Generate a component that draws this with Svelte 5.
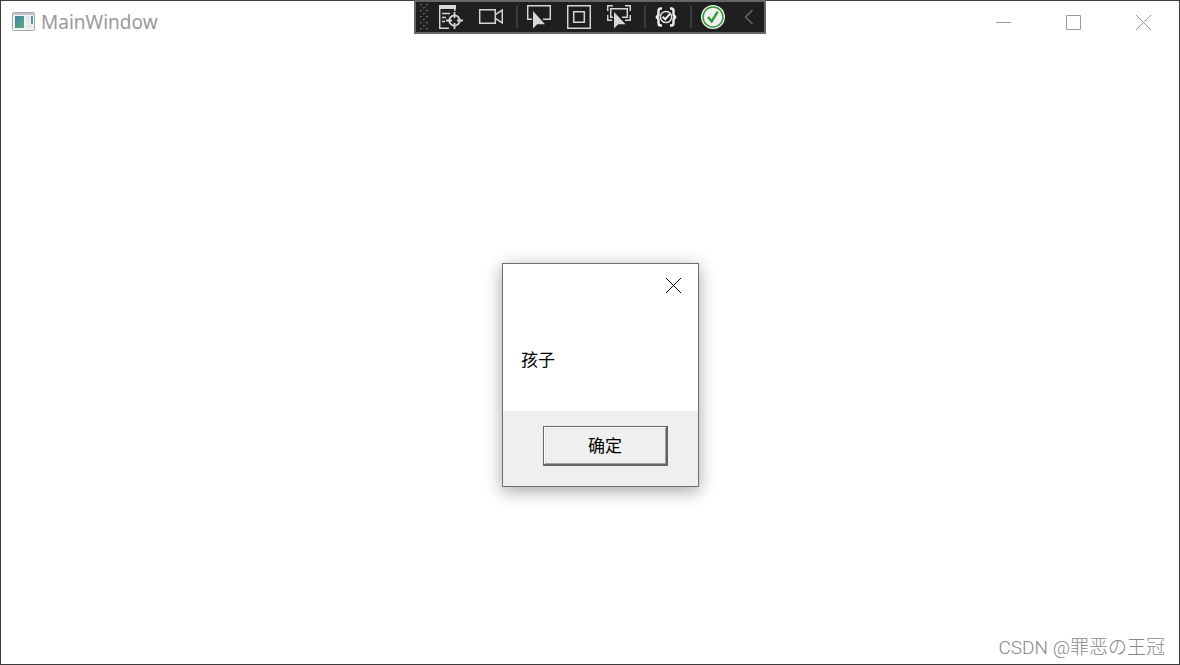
<script>
  let open = $state(true);
</script>

<main class="window">
  <header class="titlebar">
    <svg class="app-icon" viewBox="0 0 24 20" aria-hidden="true">
      <defs>
        <linearGradient id="pane" x1="0" y1="0" x2="1" y2="1">
          <stop offset="0" stop-color="#4580a8" />
          <stop offset="1" stop-color="#5cb377" />
        </linearGradient>
      </defs>
      <rect x="0.5" y="0.5" width="22" height="18" rx="1" fill="#f3f3f4" stroke="#a4a7ac" />
      <path d="M1 2H22" stroke="#c3c8ce" stroke-width="2" />
      <rect x="3" y="4" width="9" height="12" fill="url(#pane)" />
      <path d="M14 4h4v7h-4zM14 13h7v3h-7z" fill="#e6e6e8" />
      <rect x="19" y="4" width="2" height="8" fill="url(#pane)" />
    </svg>
    <h1>MainWindow</h1>
    <div class="controls">
      <button aria-label="Minimize">
        <svg viewBox="0 0 16 16"><path d="M0 7.5H15" /></svg>
      </button>
      <button aria-label="Maximize">
        <svg viewBox="0 0 16 16"><path d="M.5.5h14v14H.5z" /></svg>
      </button>
      <button aria-label="Close">
        <svg viewBox="0 0 16 16"><path d="M0 0L15 15M15 0L0 15" /></svg>
      </button>
    </div>
  </header>

  <nav class="toolbar" aria-label="Debug tools">
    <svg class="grip" viewBox="0 0 9 28" aria-hidden="true">
      <defs>
        <pattern id="dots" width="6" height="6" patternUnits="userSpaceOnUse">
          <path d="M0 1h2v1H0zM3 4h2v1H3z" fill="#666" />
          <path d="M0 2h1v1H0zM3 5h1v1H3z" fill="#444" />
        </pattern>
      </defs>
      <rect width="9" height="28" fill="url(#dots)" />
    </svg>
    <div class="group">
      <button aria-label="Live visual tree">
        <svg viewBox="0 0 24 24">
          <path d="M0 0H17V4H0z" fill="#d6d6d6" stroke="none" />
          <path d="M.7 3V23.3H10M15.8 3V6M3 8.5H11M3 12.5H7M3 16.5H6" />
          <circle cx="15.5" cy="15.5" r="5.2" stroke-width="1.8" />
          <path d="M15.5 7V13M15.5 18V24M7 15.5H13M18 15.5H24" stroke-width="1.8" />
        </svg>
      </button>
      <button aria-label="Record">
        <svg viewBox="0 0 24 24">
          <path d="M.7 4.7H16.3V18.3H.7zM16.3 9.7L23.3 5.2V17.8L16.3 13.3" />
        </svg>
      </button>
    </div>
    <span class="sep"></span>
    <div class="group">
      <button aria-label="Select element">
        <svg viewBox="0 0 24 24">
          <path d="M5 14.3H.7V.7H23.3V14.3H16" />
          <path d="M6 6V23.5L10.3 19.3H18z" fill="#d6d6d6" stroke="none" />
        </svg>
      </button>
      <button aria-label="Display layout adorners">
        <svg viewBox="0 0 24 24">
          <path d="M.7.7H23.3V23.3H.7zM6.7 6.7H17.3V17.3H6.7z" />
        </svg>
      </button>
      <button aria-label="Track focused element">
        <svg viewBox="0 0 24 24">
          <path d="M.7 6V.7H6M18 .7H23.3V6M.7 10V15.3H5M23.3 10V15.3H18M6 12.3H3.7V3.7H20.3V12.3H15" />
          <path d="M7 7V23.5L11.3 19.3H18.5z" fill="#d6d6d6" stroke="#1f1f1f" stroke-width="2" paint-order="stroke" />
        </svg>
      </button>
    </div>
    <span class="sep"></span>
    <button class="narrow" aria-label="Binding failures">
      <svg viewBox="0 0 24 24">
        <path d="M8 3.5H6.8Q4.5 3.5 4.5 5.8V9Q4.5 11.4 2 12Q4.5 12.6 4.5 15V18.2Q4.5 20.5 6.8 20.5H8M16 3.5H17.2Q19.5 3.5 19.5 5.8V9Q19.5 11.4 22 12Q19.5 12.6 19.5 15V18.2Q19.5 20.5 17.2 20.5H16" stroke="#f0f0f0" stroke-width="2.4" />
        <circle cx="12" cy="12" r="5.6" stroke="#e4e4e4" stroke-width="1.5" />
        <path d="M8.7 11.8L11.2 14.3L15.8 8.8" stroke="#f0f0f0" stroke-width="2" />
      </svg>
    </button>
    <span class="sep"></span>
    <button aria-label="Hot Reload">
      <svg viewBox="0 0 24 24">
        <circle cx="12" cy="12" r="12" fill="#f0f0f0" stroke="none" />
        <circle cx="12" cy="12" r="10" stroke="#339933" />
        <path d="M7 12L10.7 16.5L16.7 6.7" stroke="#339933" stroke-width="2.4" />
      </svg>
    </button>
    <button class="collapse" aria-label="Collapse toolbar">
      <svg viewBox="0 0 10 24"><path d="M8.5 5L1.5 12L8.5 19" stroke="#6a6a6a" /></svg>
    </button>
  </nav>

  {#if open}
    <div class="dialog" role="dialog" aria-labelledby="message">
      <button class="dismiss" aria-label="Close dialog" onclick={() => (open = false)}>
        <svg viewBox="0 0 16 16"><path d="M0 0L15 15M15 0L0 15" /></svg>
      </button>
      <p id="message">孩子</p>
      <footer>
        <button class="ok" onclick={() => (open = false)}>确定</button>
      </footer>
    </div>
  {/if}

  <p class="credit">CSDN @罪恶の王冠</p>
</main>

<style>
  :global(body) {
    margin: 0;
  }

  .window {
    position: relative;
    box-sizing: border-box;
    min-height: 100vh;
    display: flex;
    flex-direction: column;
    border: 1px solid #3c3c3e;
    background: #fff;
    font-family: "Noto Sans", "Noto Sans CJK SC", sans-serif;
  }

  button {
    display: flex;
    align-items: center;
    justify-content: center;
    padding: 0;
    border: 0;
    background: none;
    color: inherit;
    font: inherit;
  }

  svg {
    display: block;
    flex: none;
    fill: none;
  }

  .titlebar {
    display: flex;
    align-items: center;
    height: 42px;
    padding-left: 11px;
    color: #999;
  }

  .app-icon {
    width: 24px;
    height: 20px;
  }

  h1 {
    margin: 0 auto 0 5px;
    font-size: 19px;
    line-height: 24px;
    font-weight: 400;
  }

  .controls {
    display: flex;
    align-self: flex-start;
  }

  .controls button {
    width: 70px;
    height: 44px;
  }

  .controls svg,
  .dismiss svg {
    width: 16px;
    height: 16px;
    stroke: currentColor;
    stroke-width: 1px;
  }

  .toolbar {
    position: absolute;
    top: -1px;
    left: 50%;
    transform: translateX(-50%);
    box-sizing: border-box;
    display: flex;
    align-items: center;
    height: 34px;
    padding: 0 10px 0 4px;
    border: 2px solid #666;
    background: #1f1f1f;
  }

  .grip {
    width: 9px;
    height: 28px;
    margin-right: 10px;
  }

  .group {
    display: flex;
    gap: 16px;
  }

  .toolbar button svg {
    width: 24px;
    height: 24px;
    stroke: #d6d6d6;
    stroke-width: 1.5px;
  }

  .toolbar .narrow {
    width: 22px;
  }

  .sep {
    width: 2px;
    height: 22px;
    margin: 0 9px 0 13px;
    background: #3d3d3d;
  }

  .toolbar .collapse {
    margin-left: 19px;
  }

  .toolbar .collapse svg {
    width: 10px;
  }

  .dialog {
    position: absolute;
    top: 262px;
    left: 501px;
    box-sizing: border-box;
    width: 197px;
    display: flex;
    flex-direction: column;
    border: 1px solid #6e6e6e;
    background: #fff;
    box-shadow: 0 4px 16px rgba(0, 0, 0, 0.36);
    color: #000;
    font-size: 17px;
    line-height: 24px;
  }

  .dismiss {
    align-self: flex-end;
    width: 48px;
    height: 44px;
  }

  #message {
    margin: 0;
    padding: 39px 18px 40px;
    font-family: "Noto Sans CJK SC", sans-serif;
  }

  footer {
    display: flex;
    justify-content: flex-end;
    padding: 15px 30px 20px;
    background: #efefef;
  }

  .ok {
    width: 125px;
    height: 40px;
    padding-bottom: 2px;
    border: 1px solid #646464;
    border-width: 1px 2px 2px 1px;
    background: #efefef;
    box-shadow:
      inset 1px 1px #fff,
      inset -1px -1px #a0a0a0,
      inset 2px 2px #e3e3e3;
    font-family: "Noto Sans CJK SC", sans-serif;
  }

  .credit {
    margin: auto 14px 4px auto;
    color: #888;
    font-family: Roboto, "Noto Sans CJK SC", sans-serif;
    font-size: 19px;
    line-height: 24px;
    font-weight: 300;
  }
</style>
